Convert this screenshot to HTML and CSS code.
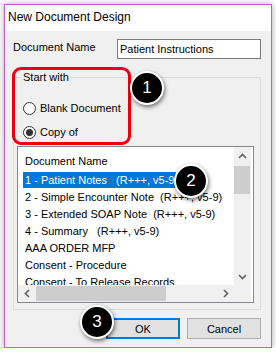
FILE: index.html
```html
<!DOCTYPE html>
<html>
<head>
  <meta charset="UTF-8">
  <title>New Document Design</title>
  <link rel="stylesheet" href="styles.css">
</head>
<body>

  <div class="dialog">
    <div class="titlebar">New Document Design</div>

    <div class="content">
      <div class="name-row">
        <label class="name-label">Document Name</label>
        <div class="textbox">Patient Instructions</div>
      </div>

      <fieldset class="group">
        <legend>Start with</legend>
        <div class="radio-row"><span class="radio"></span>Blank Document</div>
        <div class="radio-row"><span class="radio checked"></span>Copy of</div>

        <div class="listbox">
          <div class="list-items">
            <div class="list-head">Document Name</div>
            <div class="item"><span class="sel">1 - Patient Notes   (R+++, v5-9)</span></div>
            <div class="item"><span>2 - Simple Encounter Note  (R+++, v5-9)</span></div>
            <div class="item"><span>3 - Extended SOAP Note  (R+++, v5-9)</span></div>
            <div class="item"><span>4 - Summary   (R+++, v5-9)</span></div>
            <div class="item"><span>AAA ORDER MFP</span></div>
            <div class="item"><span>Consent - Procedure</span></div>
            <div class="item"><span>Consent - To Release Records</span></div>
          </div>

          <div class="vscroll">
            <div class="sb-btn">
              <svg width="9" height="6" viewBox="0 0 9 6"><path d="M1 5 L4.5 1.5 L8 5" fill="none" stroke="#606060" stroke-width="1.6"/></svg>
            </div>
            <div class="vthumb"></div>
            <div class="sb-fill"></div>
            <div class="sb-btn">
              <svg width="9" height="6" viewBox="0 0 9 6"><path d="M1 1 L4.5 4.5 L8 1" fill="none" stroke="#606060" stroke-width="1.6"/></svg>
            </div>
          </div>

          <div class="hscroll">
            <div class="sb-btn">
              <svg width="6" height="9" viewBox="0 0 6 9"><path d="M5 1 L1.5 4.5 L5 8" fill="none" stroke="#606060" stroke-width="1.6"/></svg>
            </div>
            <div class="hthumb"></div>
            <div class="sb-fill"></div>
            <div class="sb-btn">
              <svg width="6" height="9" viewBox="0 0 6 9"><path d="M1 1 L4.5 4.5 L1 8" fill="none" stroke="#606060" stroke-width="1.6"/></svg>
            </div>
          </div>

          <div class="corner"></div>
        </div>
      </fieldset>

      <div class="buttons">
        <button class="btn default">OK</button>
        <button class="btn">Cancel</button>
      </div>
    </div>

    <!-- callouts drawn over the dialog -->
    <div class="highlight"></div>
    <div class="badge b1">1</div>
    <div class="badge b2">2</div>
    <div class="badge b3">3</div>
  </div>

</body>
</html>
```

FILE: styles.css
```css
body {
  margin: 0;
  background: #ffffff;
  font-family: "Liberation Sans", Arial, sans-serif;
  font-size: 11px;
  color: #000;
}
.dialog {
  position: relative;
  margin: 4px 0 0 4px;
  width: 266px;
  height: 342px;
  border: 1px solid #c65cc6;
  background: #f0f0f0;
  box-shadow: 0 0 6px rgba(0, 0, 0, 0.35);
  display: flex;
  flex-direction: column;
}
.titlebar {
  height: 26px;
  background: #fff;
  font-size: 12px;
  line-height: 25px;
  padding-left: 3px;
}
.content {
  padding: 8px 10px 0 8px;
  display: flex;
  flex-direction: column;
}
.name-row {
  display: flex;
  align-items: center;
}
.name-label {
  width: 104px;
  position: relative;
  top: -2px;
}
.textbox {
  width: 140px;
  height: 18px;
  border: 1px solid #7a7a7a;
  background: #fff;
  line-height: 19px;
  padding-left: 2px;
}
.group {
  margin: 12px 0 0 0;
  padding: 12px 6px 6px 3px;
  border: 1px solid #dcdcdc;
  min-width: 0;
}
.group legend {
  padding: 0 1px;
  margin-left: 5px;
  line-height: 13px;
}
.radio-row {
  display: flex;
  align-items: center;
  height: 24px;
  padding-left: 6px;
}
.radio {
  width: 11px;
  height: 11px;
  border: 1px solid #333;
  border-radius: 50%;
  background: #fff;
  margin-right: 4px;
  display: flex;
  align-items: center;
  justify-content: center;
}
.radio.checked::after {
  content: "";
  width: 7px;
  height: 7px;
  border-radius: 50%;
  background: #333;
}
.listbox {
  margin-top: 2px;
  height: 155px;
  border: 1px solid #828790;
  background: #fff;
  display: grid;
  grid-template-columns: 216px 17px;
  grid-template-rows: 138px 17px;
}
.list-items {
  overflow: hidden;
  padding: 6px 0 0 5px;
}
.list-head {
  line-height: 17px;
  padding-left: 2px;
  margin-bottom: 1px;
}
.item {
  height: 17px;
  display: flex;
  align-items: center;
}
.item span {
  padding: 0 2px;
  line-height: 16px;
  white-space: pre;
}
.item .sel {
  background: #0078d7;
  color: #fff;
}
.vscroll {
  background: #f0f0f0;
  display: flex;
  flex-direction: column;
}
.hscroll {
  background: #f0f0f0;
  display: flex;
}
.sb-btn {
  flex: 0 0 17px;
  display: flex;
  align-items: center;
  justify-content: center;
}
.vthumb {
  margin: 2px 1px 0 0;
  height: 28px;
  background: #cdcdcd;
}
.hthumb {
  margin: 1px 0 1px 1px;
  width: 130px;
  background: #cdcdcd;
}
.sb-fill {
  flex: 1;
}
.corner {
  background: #f0f0f0;
}
.buttons {
  display: flex;
  justify-content: flex-end;
  gap: 7px;
  margin-top: 8px;
}
.btn {
  width: 74px;
  height: 21px;
  font-family: "Liberation Sans", Arial, sans-serif;
  font-size: 11px;
  background: #e1e1e1;
  border: 1px solid #adadad;
  padding: 0;
}
.btn.default {
  border-color: #0078d7;
  box-shadow: inset 0 0 0 1px #0078d7;
}
.highlight {
  position: absolute;
  left: 7px;
  top: 62px;
  width: 113px;
  height: 72px;
  border: 3px solid #e8000b;
  border-radius: 9px;
}
.badge {
  position: absolute;
  width: 30px;
  height: 30px;
  border: 2px solid #fff;
  border-radius: 50%;
  background: #000;
  color: #fff;
  font-family: "Liberation Sans", Arial, sans-serif;
  font-size: 17px;
  line-height: 30px;
  text-align: center;
  box-shadow: 1px 2px 4px rgba(0, 0, 0, 0.55);
}
.b1 { left: 125px; top: 66px; }
.b2 { left: 169px; top: 159px; }
.b3 { left: 75px; top: 300px; }
```
